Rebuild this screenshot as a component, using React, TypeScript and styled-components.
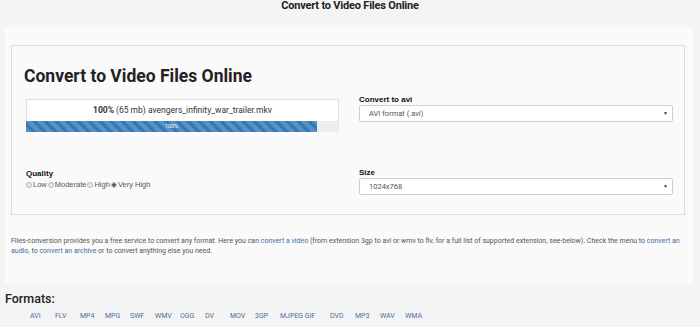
import React from "react";
import styled, { createGlobalStyle } from "styled-components";

const GlobalStyle = createGlobalStyle`
  html, body {
    margin: 0;
    padding: 0;
    background: #f4f4f4;
    font-family: Roboto, "Liberation Sans", Arial, sans-serif;
    color: #333;
  }
  * { box-sizing: border-box; }
`;

const Page = styled.div`
  width: 700px;
  height: 327px;
  overflow: hidden;
`;

const TopTitle = styled.h1`
  margin: 0;
  height: 27px;
  text-align: center;
  font-size: 11px;
  line-height: 12px;
  font-weight: 700;
  color: #222;
  letter-spacing: -0.2px;
`;

const Panel = styled.div`
  margin: 0 7px 0 5px;
  background: #fafafa;
  padding: 18px 8px 0 6px;
  height: 256px;
`;

const ConverterBox = styled.div`
  border: 1px solid #dcdcdc;
  height: 170px;
  padding: 0 11px 0 14px;
`;

const Heading = styled.h2`
  margin: 0 0 0 -2px;
  padding-top: 19px;
  font-size: 17.5px;
  line-height: 22px;
  font-weight: 700;
  color: #222;
`;

const Grid = styled.div`
  display: grid;
  grid-template-columns: 313px 314px;
  column-gap: 20px;
  margin-top: 8px;
`;

const Cell = styled.div<{ $h: number }>`
  height: ${(p) => p.$h}px;
`;

const Progress = styled.div`
  margin-top: 4px;
`;

const ProgressText = styled.div`
  background: #fff;
  border: 1px solid #dedede;
  border-bottom: none;
  height: 22px;
  text-align: center;
  font-size: 8.5px;
  line-height: 21px;
  color: #333;
  b { font-weight: 700; }
`;

const Track = styled.div`
  height: 11px;
  background: #ececec;
`;

const Fill = styled.div`
  height: 100%;
  background-color: #337ab7;
  background-image: linear-gradient(
    45deg,
    rgba(255, 255, 255, 0.18) 25%,
    transparent 25%,
    transparent 50%,
    rgba(255, 255, 255, 0.18) 50%,
    rgba(255, 255, 255, 0.18) 75%,
    transparent 75%,
    transparent
  );
  background-size: 11px 11px;
  color: #fff;
  font-size: 5.5px;
  line-height: 11px;
  text-align: center;
`;

const Label = styled.div`
  font-family: "Liberation Sans", Arial, sans-serif;
  font-weight: 700;
  font-size: 8px;
  line-height: 9px;
  color: #111;
`;

const Select = styled.div`
  position: relative;
  margin-top: 1px;
  height: 17px;
  background: #fff;
  border: 1px solid #cfcfcf;
  border-radius: 2px;
  padding-left: 9px;
  font-size: 7.5px;
  line-height: 15px;
  color: #555;
`;

const Caret = styled.span`
  position: absolute;
  right: 4px;
  top: 0;
  font-size: 5px;
  color: #333;
`;

const Radios = styled.div`
  display: flex;
  align-items: center;
  margin-top: 2px;
  font-family: "Liberation Sans", Arial, sans-serif;
  font-size: 7.5px;
  color: #555;
`;

const RadioItem = styled.span`
  display: inline-flex;
  align-items: center;
  margin-right: 1px;
`;

const Dot = styled.span<{ $on?: boolean }>`
  display: inline-block;
  width: 6px;
  height: 6px;
  border-radius: 50%;
  border: 1px solid #b5b5b5;
  background: ${(p) => (p.$on ? "radial-gradient(circle, #555 0 1.5px, #eee 2px)" : "#ebebeb")};
  margin-right: 1px;
`;

const Intro = styled.p`
  margin: 21px 0 0 0;
  font-size: 7px;
  line-height: 10px;
  color: #555;
  a { color: #3a6ea5; text-decoration: none; }
`;

const FormatsTitle = styled.h3`
  margin: 9px 0 0 5px;
  font-size: 12.5px;
  line-height: 14px;
  font-weight: 500;
  color: #222;
`;

const FormatList = styled.div`
  display: flex;
  margin: 6px 0 0 30px;
`;

const Format = styled.a<{ $wide?: boolean }>`
  width: ${(p) => (p.$wide ? 50 : 25)}px;
  font-size: 7px;
  line-height: 9px;
  color: #4a6ea0;
  text-decoration: none;
`;

const formats: [string, boolean?][] = [
  ["AVI"], ["FLV"], ["MP4"], ["MPG"], ["SWF"], ["WMV"], ["OGG"], ["DV"],
  ["MOV"], ["3GP"], ["MJPEG GIF", true], ["DVD"], ["MP3"], ["WAV"], ["WMA"],
];

export default function App() {
  return (
    <Page>
      <GlobalStyle />
      <TopTitle>Convert to Video Files Online</TopTitle>
      <Panel>
        <ConverterBox>
          <Heading>Convert to Video Files Online</Heading>
          <Grid>
            <Cell $h={73}>
              <Progress>
                <ProgressText>
                  <b>100%</b> (65 mb) avengers_infinity_war_trailer.mkv
                </ProgressText>
                <Track>
                  <Fill style={{ width: "93%" }}>100%</Fill>
                </Track>
              </Progress>
            </Cell>
            <Cell $h={73}>
              <Label>Convert to avi</Label>
              <Select>
                AVI format (.avi)
                <Caret>▼</Caret>
              </Select>
            </Cell>
            <Cell $h={30}>
              <Label style={{ marginTop: 1 }}>Quality</Label>
              <Radios>
                <RadioItem><Dot />Low</RadioItem>
                <RadioItem><Dot />Moderate</RadioItem>
                <RadioItem><Dot />High</RadioItem>
                <RadioItem><Dot $on />Very High</RadioItem>
              </Radios>
            </Cell>
            <Cell $h={30}>
              <Label>Size</Label>
              <Select>
                1024x768
                <Caret>▼</Caret>
              </Select>
            </Cell>
          </Grid>
        </ConverterBox>
        <Intro>
          Files-conversion provides you a free service to convert any format. Here you can{" "}
          <a href="#">convert a video</a> (from extension 3gp to avi or wmv to flv, for a full list of
          supported extension, see-below). Check the menu to <a href="#">convert an audio</a>, to{" "}
          <a href="#">convert an archive</a> or to convert anything else you need.
        </Intro>
      </Panel>
      <FormatsTitle>Formats:</FormatsTitle>
      <FormatList>
        {formats.map(([f, wide]) => (
          <Format key={f} href="#" $wide={wide}>
            {f}
          </Format>
        ))}
      </FormatList>
    </Page>
  );
}
